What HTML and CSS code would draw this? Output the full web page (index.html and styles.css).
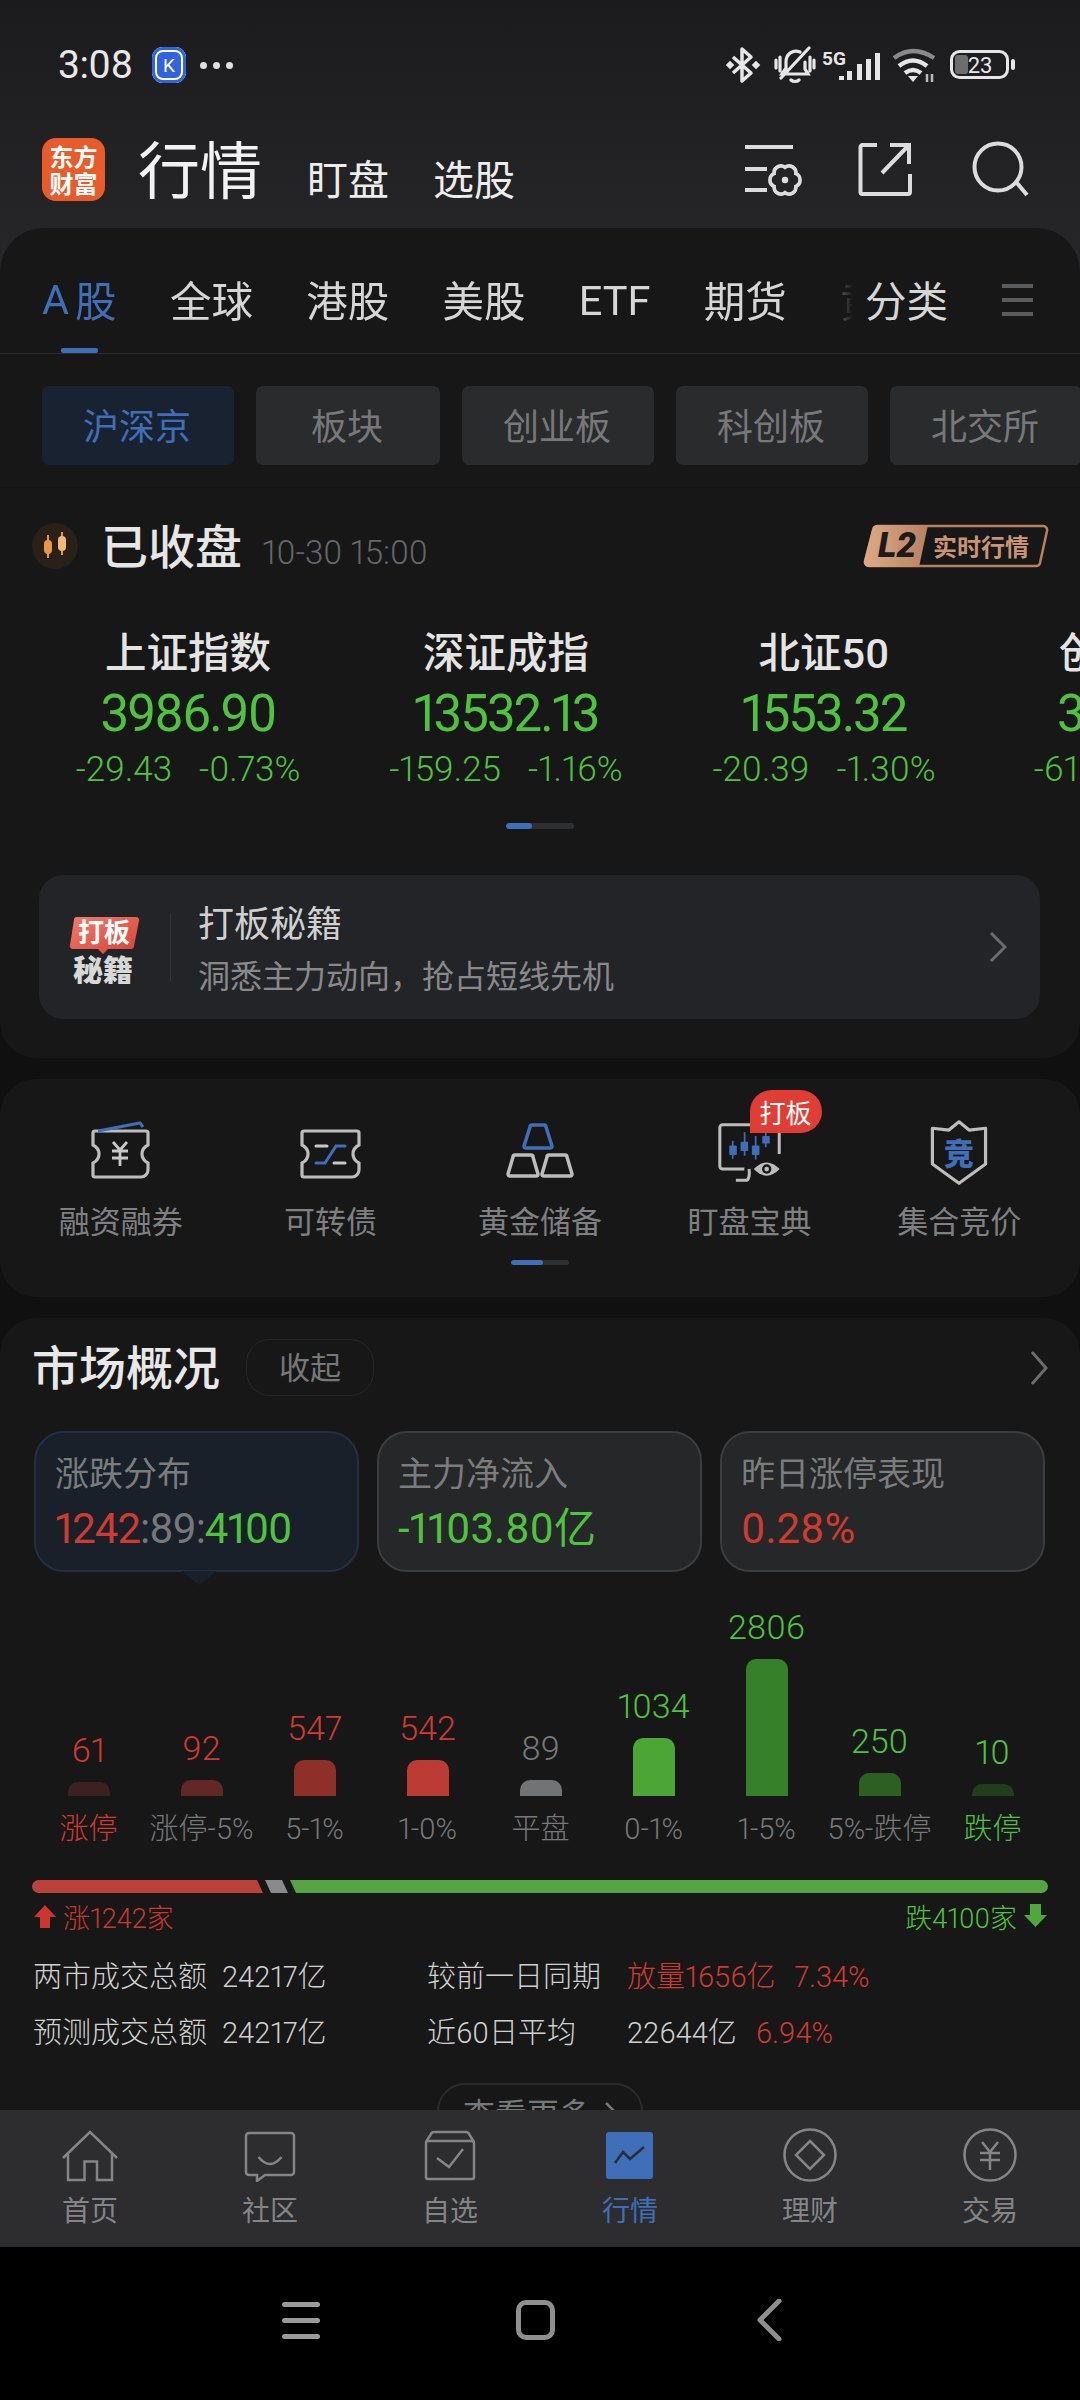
FILE: index.html
```html
<!DOCTYPE html>
<html lang="zh-CN">
<head>
<meta charset="utf-8">
<title>行情</title>
<link rel="stylesheet" href="styles.css">
</head>
<body>
<div class="phone">
  <div class="statusbar">
    <span class="clock">3:08</span>
    <span class="kbadge">K</span>
    <span class="dots"><i></i><i></i><i></i></span>
    <div class="status-icons">
      <svg class="si si-bt" width="36" height="38" viewBox="0 0 36 38"><path d="M8 11 26 27 17 35V3l9 8L8 27" fill="none" stroke="#e6e6e6" stroke-width="3.500" stroke-linejoin="round"/><rect x="2" y="16" width="6" height="6" fill="#e6e6e6" transform="rotate(45 5 19)"/><rect x="28" y="16" width="6" height="6" fill="#e6e6e6" transform="rotate(45 31 19)"/></svg>
      <svg class="si si-bell" width="42" height="38" viewBox="0 0 42 38"><path d="M26 6c-7-3-14 2-14 10v6l-4 6h26l-3-5v-7M17 34c2 2 6 2 8 0M7 32 35 2M2 14v8M6 11v14M36 11v14M40 14v8" fill="none" stroke="#e6e6e6" stroke-width="3.200" stroke-linecap="round"/></svg>
      <svg class="si si-net" width="60" height="33" viewBox="0 0 60 33"><text class="five-g" x="0" y="16">5G</text><path d="M17 27v4h5v-4zM25 22v9h5v-9zM35 15v16h5V15zM44 10v21h5V10zM53 4v27h5V4z" fill="#e6e6e6"/></svg>
      <svg class="si si-wifi" width="44" height="36" viewBox="0 0 44 36"><path d="M2 11Q21-3 42 11" fill="none" stroke="#8a8a8a" stroke-width="4.500"/><path d="M7 19Q21 8 35 19M13 26Q21 20 29 26" fill="none" stroke="#e6e6e6" stroke-width="4.500"/><path d="M21 35l-5-6h10z" fill="#e6e6e6"/><path d="M35 27v8M40 27v8" stroke="#bbb" stroke-width="2.500"/></svg>
      <svg class="si" width="66" height="30" viewBox="0 0 66 30"><rect x="1.500" y="1.500" width="56" height="26" rx="8" fill="none" stroke="#e6e6e6" stroke-width="3"/><rect x="5" y="5" width="13" height="19" rx="3" fill="#6d6d6f"/><rect x="61" y="9" width="4" height="11" rx="2" fill="#e6e6e6"/><text class="batt" x="30" y="23" text-anchor="middle">23</text></svg>
    </div>
  </div>

  <header class="appbar">
    <div class="logo"><span>东方</span><span>财富</span></div>
    <div class="heads">
      <span class="h-main">行情</span>
      <span class="h-sub">盯盘</span>
      <span class="h-sub">选股</span>
    </div>
    <div class="app-icons">
      <svg width="60" height="54" viewBox="0 0 60 54" class="ai-list"><path d="M2 5H50M2 27H24M2 48H24" stroke="#dcdcdc" stroke-width="4" fill="none"/><g transform="translate(42 38) scale(1.150)"><path d="M9.500 5.500A6 6 0 0 1 0 11 6 6 0 0 1-9.500 5.500 6 6 0 0 1-9.500-5.500 6 6 0 0 1 0-11 6 6 0 0 1 9.500-5.500 6 6 0 0 1 9.500 5.500Z" fill="none" stroke="#dcdcdc" stroke-width="3.200"/><circle r="2.800" fill="#dcdcdc"/></g></svg>
      <svg width="54" height="54" viewBox="0 0 54 54" class="ai-share"><path d="M19 3H4.500a2 2 0 0 0-2 2v45a2 2 0 0 0 2 2H50a2 2 0 0 0 2-2V32M24 31 51 3M32 3h19v19" fill="none" stroke="#dcdcdc" stroke-width="4"/></svg>
      <svg width="58" height="58" viewBox="0 0 58 58" class="ai-search"><circle cx="26" cy="27" r="23.500" fill="none" stroke="#dcdcdc" stroke-width="4"/><path d="M45 43 55 55" stroke="#dcdcdc" stroke-width="4"/></svg>
    </div>
  </header>

  <main class="content">
    <section class="panel panel-market">
      <nav class="tabs">
        <div class="tabs-scroll">
          <span class="tab is-active"><b class="tab-a">A</b>股</span>
          <span class="tab">全球</span>
          <span class="tab">港股</span>
          <span class="tab">美股</span>
          <span class="tab tab-latin">ETF</span>
          <span class="tab">期货</span>
          <span class="tab">黄金</span>
        </div>
        <span class="tab tab-all">分类</span>
        <span class="tab-menu"><i></i><i></i><i></i></span>
      </nav>
      <div class="chips">
        <span class="chip is-active">沪深京</span>
        <span class="chip">板块</span>
        <span class="chip">创业板</span>
        <span class="chip">科创板</span>
        <span class="chip">北交所</span>
      </div>

      <div class="closed">
        <span class="candle-dot"><svg width="46" height="46" viewBox="0 0 46 46"><path d="M16 12v23M30 9v23" stroke="#e89545" stroke-width="2"/><rect x="12" y="17" width="8" height="14" rx="4" fill="#e89545"/><rect x="26" y="13" width="8" height="15" rx="4" fill="#f2b878"/></svg></span>
        <span class="closed-title">已收盘</span>
        <span class="closed-time">10-30 15:00</span>
        <svg class="l2" width="186" height="44" viewBox="0 0 186 44">
          <defs><linearGradient id="cu" x1="0" x2="1"><stop offset="0" stop-color="#dcaa86"/><stop offset="1" stop-color="#b98060"/></linearGradient></defs>
          <path d="M15 2H180a4 4 0 0 1 4 5l-7 32a4 4 0 0 1-4 3H6a4 4 0 0 1-4-5L10 6a5 5 0 0 1 5-4Z" fill="#161718" stroke="#b98060" stroke-width="2.500"/>
          <path d="M15 1H65L56 43H6a5 5 0 0 1-5-6L9 6a6 6 0 0 1 6-5Z" fill="url(#cu)"/>
          <text class="l2-a" x="15" y="33">L2</text>
          <text class="l2-b" x="70" y="32">实时行情</text>
        </svg>
      </div>

      <div class="indices">
        <div class="index"><div class="i-name">上证指数</div><div class="i-price">3986.90</div><div class="i-chg"><span>-29.43</span><span>-0.73%</span></div></div>
        <div class="index"><div class="i-name">深证成指</div><div class="i-price">13532.13</div><div class="i-chg"><span>-159.25</span><span>-1.16%</span></div></div>
        <div class="index"><div class="i-name">北证50</div><div class="i-price">1553.32</div><div class="i-chg"><span>-20.39</span><span>-1.30%</span></div></div>
        <div class="index"><div class="i-name">创业板指</div><div class="i-price">3263.76</div><div class="i-chg"><span>-61.47</span><span>-1.85%</span></div></div>
      </div>
      <div class="pager pager-a"><i></i></div>

      <div class="banner">
        <svg class="banner-ico" width="72" height="70" viewBox="0 0 72 70">
          <defs><linearGradient id="rd" x1="0" x2="1" y1="0" y2="1"><stop offset="0" stop-color="#ef7d6a"/><stop offset="1" stop-color="#d6423a"/></linearGradient></defs>
          <path d="M8 3H68a3 3 0 0 1 3 4L66 32a3 3 0 0 1-3 3H40l-5 5-5-5H5a3 3 0 0 1-3-4L6 6a3 3 0 0 1 2-3Z" fill="url(#rd)"/>
          <text class="bi-a" x="36" y="28" text-anchor="middle">打板</text>
          <text class="bi-b" x="35" y="67" text-anchor="middle">秘籍</text>
        </svg>
        <span class="banner-line"></span>
        <div class="banner-text">
          <div class="banner-title">打板秘籍</div>
          <div class="banner-sub">洞悉主力动向，抢占短线先机</div>
        </div>
        <svg class="chev" width="18" height="30" viewBox="0 0 18 30"><path d="M2 1 16 15 2 29" fill="none" stroke="#6a6b6d" stroke-width="3"/></svg>
      </div>
    </section>

    <section class="panel panel-tools">
      <div class="tools">
        <div class="tool">
          <svg class="tool-ico" width="66" height="66" viewBox="0 0 66 66"><path d="M7 11H58a2 2 0 0 1 2 2V25q-6 3-6 9t6 9v7a7 7 0 0 1-7 7H7a2 2 0 0 1-2-2V43q6-3 6-9t-6-9V13a2 2 0 0 1 2-2Z" fill="none" stroke="#bdbdbd" stroke-width="3.200"/><path d="M10 11 52 3l3 4" fill="none" stroke="#3f6fb8" stroke-width="3"/><path d="M25 22l7 8 7-8M24 31H40M24 38H40M32 30V46" fill="none" stroke="#c8c8c8" stroke-width="2.800"/></svg>
          <span class="tool-label">融资融券</span>
        </div>
        <div class="tool">
          <svg class="tool-ico" width="66" height="66" viewBox="0 0 66 66"><path d="M7 11H60a2 2 0 0 1 2 2V25q-6 3-6 9t6 9v7a7 7 0 0 1-7 7H7a2 2 0 0 1-2-2V43q6-3 6-9t-6-9V13a2 2 0 0 1 2-2Z" fill="none" stroke="#bdbdbd" stroke-width="3.200"/><path d="M19 26H30M37 43H48" stroke="#c8c8c8" stroke-width="3" stroke-linecap="round"/><path d="M19 43h9L39 26h9" fill="none" stroke="#3f6fb8" stroke-width="3" stroke-linecap="round"/></svg>
          <span class="tool-label">可转债</span>
        </div>
        <div class="tool">
          <svg class="tool-ico" width="68" height="66" viewBox="0 0 68 66"><path d="M26 5H38a2 2 0 0 1 2 2L46 26a2 2 0 0 1-2 2H20a2 2 0 0 1-2-2L24 7a2 2 0 0 1 2-2Z" fill="none" stroke="#3f6fb8" stroke-width="3.500" stroke-linejoin="round"/><path d="M9 35H25a2 2 0 0 1 2 2L32 54a2 2 0 0 1-2 2H4a2 2 0 0 1-2-2L7 37a2 2 0 0 1 2-2ZM43 35H59a2 2 0 0 1 2 2L66 54a2 2 0 0 1-2 2H38a2 2 0 0 1-2-2L41 37a2 2 0 0 1 2-2Z" fill="none" stroke="#bdbdbd" stroke-width="3.500"/></svg>
          <span class="tool-label">黄金储备</span>
        </div>
        <div class="tool">
          <svg class="tool-ico" width="72" height="66" viewBox="0 0 72 70"><path d="M38 5H7a3 3 0 0 0-3 3V49a3 3 0 0 0 3 3H30M67 10V36M35 52c1 8-1 12-3 12H21" fill="none" stroke="#bdbdbd" stroke-width="3.200"/><path d="M17.700 22v19M30.300 13v25M42 17v25M52.700 12v17" stroke="#3f6fb8" stroke-width="1.800"/><rect x="14" y="27" width="8" height="10" rx="1" fill="#3f6fb8"/><rect x="26" y="23" width="8" height="10" rx="1" fill="#3f6fb8"/><rect x="38" y="27" width="8" height="10" rx="1" fill="#3f6fb8"/><rect x="49" y="17" width="8" height="8" rx="1" fill="#3f6fb8"/><path d="M40 52q13.700-14 27.500 0-13.800 14-27.500 0Z" fill="#bdbdbd"/><circle cx="53.700" cy="52" r="5" fill="#161718"/><circle cx="53.700" cy="52" r="2.500" fill="#bdbdbd"/></svg>
          <span class="tag-hot">打板</span>
          <span class="tool-label">盯盘宝典</span>
        </div>
        <div class="tool">
          <svg class="tool-ico" width="66" height="70" viewBox="0 0 66 72"><path d="M4 9 22 11 33 2 44 11 62 9V48L33 69 4 48Z" fill="none" stroke="#bdbdbd" stroke-width="3.500" stroke-linejoin="round"/><text class="shield-t" x="33" y="49" text-anchor="middle">竞</text></svg>
          <span class="tool-label">集合竞价</span>
        </div>
      </div>
      <div class="pager pager-b"><i></i></div>
    </section>

    <section class="panel panel-overview">
      <div class="ov-head">
        <span class="ov-title">市场概况</span>
        <span class="ov-pill"><span>收起</span></span>
        <svg class="chev chev-ov" width="18" height="34" viewBox="0 0 18 34"><path d="M2 1 16 17 2 33" fill="none" stroke="#6a6b6d" stroke-width="3"/></svg>
      </div>
      <div class="cards">
        <div class="card is-active"><div class="card-label">涨跌分布</div><div class="card-value card-value-tight"><span class="up">1242</span><span class="flat">:89:</span><span class="down">4100</span></div></div>
        <div class="card"><div class="card-label">主力净流入</div><div class="card-value down">-1103.80亿</div></div>
        <div class="card"><div class="card-label">昨日涨停表现</div><div class="card-value up">0.28%</div></div>
      </div>
      <div class="chart">
        <div class="col"><span class="c-val up">61</span><i class="bar b1" style="height:14px"></i><span class="c-lab up">涨停</span></div>
        <div class="col"><span class="c-val up">92</span><i class="bar b2" style="height:16px"></i><span class="c-lab">涨停-5%</span></div>
        <div class="col"><span class="c-val up">547</span><i class="bar b3" style="height:36px"></i><span class="c-lab">5-1%</span></div>
        <div class="col"><span class="c-val up">542</span><i class="bar b4" style="height:36px"></i><span class="c-lab">1-0%</span></div>
        <div class="col"><span class="c-val flat">89</span><i class="bar b5" style="height:16px"></i><span class="c-lab">平盘</span></div>
        <div class="col"><span class="c-val down">1034</span><i class="bar b6" style="height:58px"></i><span class="c-lab">0-1%</span></div>
        <div class="col"><span class="c-val down">2806</span><i class="bar b7" style="height:137px"></i><span class="c-lab">1-5%</span></div>
        <div class="col"><span class="c-val down">250</span><i class="bar b8" style="height:23px"></i><span class="c-lab">5%-跌停</span></div>
        <div class="col"><span class="c-val down">10</span><i class="bar b9" style="height:12px"></i><span class="c-lab down">跌停</span></div>
      </div>
      <div class="ratio">
        <i class="r-up" style="width:231px"></i>
        <i class="r-flat" style="width:23px"></i>
        <i class="r-down"></i>
      </div>
      <div class="ratio-text">
        <span class="rt up"><svg width="24" height="24" viewBox="0 0 24 24"><path d="M12 1 23 13H17V24H7V13H1Z" fill="#c9372f"/></svg>涨1242家</span>
        <span class="rt down">跌4100家<svg width="25" height="24" viewBox="0 0 25 24"><path d="M12.500 23 24 11H18V0H7V11H1Z" fill="#4ea83a"/></svg></span>
      </div>
      <div class="turnover">
        <span>两市成交总额</span><span>24217亿</span><span>较前一日同期</span><span class="t-last up"><span>放量1656亿</span><span>7.34%</span></span>
        <span>预测成交总额</span><span>24217亿</span><span>近60日平均</span><span class="t-last"><span>22644亿</span><span class="up">6.94%</span></span>
      </div>
      <div class="more"><span>查看更多</span><svg width="12" height="20" viewBox="0 0 12 20"><path d="M1 1 10 10 1 19" fill="none" stroke="#77787a" stroke-width="2.500"/></svg></div>
    </section>
  </main>

  <nav class="tabbar">
    <div class="nav-item">
      <svg width="60" height="54" viewBox="0 0 60 54"><path d="M3 30 30 4 57 30M8 25V52H24.500V33.500H37V52H52V25" fill="none" stroke="#848587" stroke-width="2.500"/></svg>
      <span>首页</span>
    </div>
    <div class="nav-item">
      <svg width="60" height="54" viewBox="0 0 60 54"><path d="M9 5H51a3 3 0 0 1 3 3V44a3 3 0 0 1-3 3H25l-8 6V47H9a3 3 0 0 1-3-3V8a3 3 0 0 1 3-3ZM18.500 29q11.500 14 23 0" fill="none" stroke="#848587" stroke-width="2.500"/></svg>
      <span>社区</span>
    </div>
    <div class="nav-item">
      <svg width="60" height="54" viewBox="0 0 60 54"><path d="M8 51H52a2 2 0 0 0 2-2V15a2 2 0 0 0-2-2H8a2 2 0 0 0-2 2V49a2 2 0 0 0 2 2ZM6 14 11 6a3 3 0 0 1 3-2H46a3 3 0 0 1 3 2l5 8M17 30l12 9L43 21" fill="none" stroke="#848587" stroke-width="2.500"/></svg>
      <span>自选</span>
    </div>
    <div class="nav-item is-active">
      <svg width="60" height="54" viewBox="0 0 60 54"><rect x="6" y="4" width="47" height="47" rx="3" fill="#3f6fb8"/><path d="M15 35 23 24 30 31 44 19" fill="none" stroke="#2d2e30" stroke-width="2.500"/></svg>
      <span>行情</span>
    </div>
    <div class="nav-item">
      <svg width="60" height="54" viewBox="0 0 60 54"><circle cx="30" cy="27" r="25.500" fill="none" stroke="#848587" stroke-width="2.500"/><path d="M30 13 44 27 30 41 16 27Z" fill="none" stroke="#848587" stroke-width="2.500"/></svg>
      <span>理财</span>
    </div>
    <div class="nav-item">
      <svg width="60" height="54" viewBox="0 0 60 54"><circle cx="30" cy="27" r="25.500" fill="none" stroke="#848587" stroke-width="2.500"/><path d="M22 14l8 10 8-10M20 25H40M20 32H40M30 24V42" fill="none" stroke="#848587" stroke-width="2.500"/></svg>
      <span>交易</span>
    </div>
  </nav>

  <div class="sysnav">
    <div class="sys-slot"><span class="sys-menu"><i></i><i></i><i></i></span></div>
    <div class="sys-slot"><span class="sys-home"></span></div>
    <div class="sys-slot"><svg width="26" height="42" viewBox="0 0 26 42"><path d="M23 2 4 21l19 19" fill="none" stroke="#8f8f8f" stroke-width="5" stroke-linecap="round" stroke-linejoin="round"/></svg></div>
  </div>
</div>
</body>
</html>
```
FILE: styles.css
```css
* { box-sizing: border-box; }
html, body { margin: 0; padding: 0; background: #000; }
body { font-family: Roboto, "Noto Sans CJK SC", sans-serif; font-variant-numeric: proportional-nums; color: #d8d8d8; }
i { display: block; font-style: normal; }
svg { display: block; flex-shrink: 0; }

.phone {
  width: 1080px; height: 2400px; overflow: hidden;
  display: flex; flex-direction: column;
  background: linear-gradient(#1b1b1d 0, #272729 272px, #101011 272px);
}

/* status bar */
.statusbar { height: 130px; flex-shrink: 0; display: flex; align-items: center; padding: 0 64px 0 58px; }
.clock { font-size: 39px; letter-spacing: -.5px; color: #e8e8e8; width: 94px; }
.kbadge {
  width: 34px; height: 36px; border-radius: 11px; background: #2f63e0; color: #fff;
  font-size: 19px; display: flex; align-items: center; justify-content: center;
  box-shadow: inset 0 0 0 3px #2f63e0, inset 0 0 0 5px #fff;
}
.dots { display: flex; gap: 6px; margin-left: 14px; }
.dots i { width: 7px; height: 7px; border-radius: 50%; background: #e0e0e0; }
.status-icons { margin-left: auto; display: flex; align-items: center; }
.si-bt { margin-right: 13px; }
.si-bell { margin-right: 6px; }
.si-net { margin-right: 10px; }
.si-wifi { margin-right: 14px; }
.five-g { font: 700 19px Roboto, sans-serif; fill: #e6e6e6; }
.batt { font: 400 22px Roboto, sans-serif; fill: #e8e8e8; }

/* app bar */
.appbar { height: 98px; flex-shrink: 0; display: flex; align-items: center; padding: 0 50px 20px 42px; }
.logo {
  width: 63px; height: 63px; border-radius: 14px; background: #e85c2b; color: #fff;
  display: flex; flex-direction: column; align-items: center; justify-content: center;
  font-size: 24px; line-height: 27px; font-weight: 700; font-family: "Noto Sans CJK SC", sans-serif;
}
.heads { display: flex; align-items: baseline; margin: 7px 0 0 33px; }
.h-main { font-size: 62px; line-height: 70px; color: #f2f2f2; margin-right: 45px; }
.h-sub { font-size: 41px; color: #ededed; margin-right: 44px; position: relative; top: 1px; }
.app-icons { margin-left: auto; display: flex; align-items: center; }
.ai-list { margin-right: 55px; }
.ai-share { margin-right: 60px; }

/* panels */
.content { flex: 1; min-height: 0; overflow: hidden; display: flex; flex-direction: column; gap: 21px; }
.panel { background: #171718; border-radius: 36px; flex-shrink: 0; }
.panel-market { border-radius: 44px 44px 36px 36px; height: 830px; }
.panel-tools { height: 218px; padding-top: 41px; }

/* tabs */
.tabs { display: flex; height: 126px; border-bottom: 1px solid #2a2b2d; white-space: nowrap; }
.tabs-scroll {
  width: 855px; flex-shrink: 0; display: flex; gap: 53.300px; padding-left: 42px; overflow: hidden;
  -webkit-mask-image: linear-gradient(90deg, #000 815px, rgba(0, 0, 0, .3) 842px, transparent 853px);
  mask-image: linear-gradient(90deg, #000 815px, rgba(0, 0, 0, .3) 842px, transparent 853px);
}
.tab { position: relative; display: flex; align-items: center; font-size: 41.500px; color: #d6d6d6; padding-top: 17px; flex-shrink: 0; }
.tab-latin { padding-top: 20px; }
.tab.is-active { color: #3f6fb8; }
.tab.is-active::after {
  content: ""; position: absolute; left: 19px; bottom: 0; width: 37px; height: 5px;
  border-radius: 2px; background: #3f6fb8;
}
.tab-a { font-weight: 400; margin-right: 6px; }
.tab-all { margin-left: 10px; }
.tab-menu { display: flex; flex-direction: column; justify-content: center; gap: 10px; margin: 18px 0 0 54px; }
.tab-menu i { width: 31px; height: 4px; background: #5b5c5e; }

/* chips */
.chips { display: flex; gap: 22px; padding: 32px 0 22px 42px; overflow: hidden; border-bottom: 1px solid #121314; }
.chip {
  flex-shrink: 0; height: 79px; min-width: 184px; padding: 0 43px 3px 41px; border-radius: 7px;
  background: #2a2b2d; color: #77787a; font-size: 36px; display: flex; align-items: center; justify-content: center;
}
.chip.is-active { background: #192230; color: #3f6fb8; }

/* closed */
.closed { display: flex; align-items: center; height: 46px; margin-top: 35px; padding: 0 32px; }
.candle-dot { width: 46px; height: 46px; border-radius: 50%; background: #2a2018; }
.closed-title { font-size: 47px; font-weight: 500; color: #e6e6e6; margin: -6px 0 0 23px; }
.closed-time { font-size: 33px; font-weight: 300; color: #66676a; margin: 13px 0 0 20px; }
.l2 { margin-left: auto; margin-right: -1px; }
.l2-a { font: italic 900 35px Roboto, sans-serif; fill: #1b1b1b; }
.l2-b { font: 700 24px "Noto Sans CJK SC", sans-serif; fill: #c99473; }

/* indices */
.indices { display: flex; padding-left: 29px; margin-top: 60px; overflow: hidden; }
.index { width: 318px; flex-shrink: 0; text-align: center; }
.i-name { font-size: 41.500px; line-height: 50px; color: #e4e4e4; font-weight: 500; }
.i-price { font-size: 51px; line-height: 56px; letter-spacing: -2px; margin-top: 7px; color: #4fc33e; }
.i-chg { display: flex; justify-content: center; gap: 27px; margin-top: 8px; font-size: 35px; line-height: 40px; font-weight: 300; color: #4fc33e; white-space: nowrap; }

.pager { background: #2e2f31; border-radius: 3px; margin-left: auto; margin-right: auto; overflow: hidden; }
.pager i { height: 100%; background: #3f6fb8; border-radius: 3px; }
.pager-a { width: 68px; height: 6px; margin-top: 33px; }
.pager-a i { width: 26px; }
.pager-b { width: 58px; height: 5px; margin-top: 17px; }
.pager-b i { width: 32px; }

/* banner */
.banner {
  margin: 46px 40px 0 39px; height: 144px; border-radius: 24px; background: #232427;
  display: flex; align-items: center; padding-left: 29px;
}
.banner-ico { margin-top: 3px; }
.bi-a { font: 700 26px "Noto Sans CJK SC", sans-serif; fill: #fff; }
.bi-b { font: 900 30px "Noto Sans CJK SC", sans-serif; fill: #d8d8d8; }
.banner-line { width: 1px; height: 68px; background: #34353a; margin-left: 30px; }
.banner-text { margin: 6px 0 0 27px; flex: 1; }
.banner-title { font-size: 36px; line-height: 50px; color: #d0d0d0; }
.banner-sub { font-size: 32px; line-height: 46px; margin-top: 4px; color: #88898b; }
.banner .chev { margin-right: 33px; }

/* tools */
.tools { display: grid; grid-template-columns: repeat(5, 1fr); padding: 0 16px; }
.tool { position: relative; display: flex; flex-direction: column; align-items: center; }
.tool-ico { height: 66px; }
.tool-label { font-size: 31px; line-height: 40px; margin-top: 17px; color: #7f8082; white-space: nowrap; }
.tag-hot {
  position: absolute; left: 50%; top: -30px; width: 72px; height: 43px;
  border-radius: 22px 22px 22px 0; background: #e03e35; color: #fff; font-size: 26px;
  display: flex; align-items: center; justify-content: center;
}
.shield-t { font: 900 33px "Noto Sans CJK SC", sans-serif; fill: #3f6fb8; }

/* overview */
.panel-overview { flex: 1; padding-top: 21px; border-radius: 36px 36px 0 0; overflow: hidden; }
.ov-head { display: flex; align-items: center; height: 57px; padding: 0 32px 0 32px; }
.ov-title { font-size: 47px; font-weight: 500; color: #e8e8e8; margin-top: -6px; }
.ov-pill {
  margin-left: 26px; width: 128px; height: 57px; border: 1px solid #26272a; border-radius: 24px;
  display: flex; align-items: center; justify-content: center; font-size: 31px; color: #77787a; padding-bottom: 5px;
}
.chev-ov { margin-left: auto; }

.cards { display: grid; grid-template-columns: repeat(3, 325px); gap: 18px; padding-left: 34px; margin-top: 35px; }
.card { position: relative; height: 141px; border: 2px solid #3c3d3f; border-radius: 30px; background: #262728; padding: 19px 0 0 19px; }
.card.is-active { background: #192029; border-color: #232f42; }
.card.is-active::after {
  content: ""; position: absolute; left: 145px; bottom: -15px; width: 36px; height: 14px;
  background: #192029; clip-path: polygon(0 0, 100% 0, 50% 100%);
}
.card-label { font-size: 34px; line-height: 44px; color: #7b7c7e; }
.card-value { font-size: 42px; line-height: 50px; margin-top: 8px; }
.card-value-tight { letter-spacing: -1px; }
.up { color: #cf3a31; }
.down { color: #4fc33e; }
.flat { color: #77787a; }

.chart { display: grid; grid-template-columns: repeat(9, 113px); padding-left: 32px; margin-top: 35px; height: 241px; align-items: end; }
.col { display: flex; flex-direction: column; align-items: center; }
.c-val { font-size: 34px; line-height: 40px; font-weight: 300; margin-bottom: 12px; }
.bar { width: 42px; border-radius: 10px 10px 0 0; }
.c-lab { font-size: 29px; line-height: 40px; margin-top: 13px; color: #77787a; font-weight: 300; white-space: nowrap; }
.c-lab.up { color: #cf3a31; }
.c-lab.down { color: #4fc33e; }
.b1 { background: #3d2020; }
.b2 { background: #632825; }
.b3 { background: #8f2f2a; }
.b4 { background: #bc3c35; }
.b5 { background: #727375; }
.b6 { background: #4ca636; }
.b7 { background: #37802a; }
.b8 { background: #2d5e22; }
.b9 { background: #1f3e1a; }

.ratio { display: flex; gap: 2px; height: 13px; margin: 32px 32px 0; }
.r-up { background: #bb423b; border-radius: 7px 0 0 7px; clip-path: polygon(0 0, calc(100% - 6px) 0, 100% 100%, 0 100%); }
.r-flat { background: #8a8a8c; clip-path: polygon(0 0, calc(100% - 6px) 0, 100% 100%, 6px 100%); }
.r-down { flex: 1; background: #55a545; border-radius: 0 7px 7px 0; clip-path: polygon(0 0, 100% 0, 100% 100%, 6px 100%); }

.ratio-text { display: flex; justify-content: space-between; align-items: center; height: 40px; margin-top: 3px; padding: 0 32px 0 33px; }
.rt { display: flex; align-items: center; gap: 6px; font-size: 27px; font-weight: 300; }
.rt.up { color: #c9372f; }
.rt.down { color: #4fc33e; }

.turnover { display: grid; grid-template-columns: 189px 205px 200px auto; padding-left: 33px; margin-top: 13px; font-size: 29px; line-height: 56px; color: #d0d0d0; font-weight: 300; }
.t-last { display: flex; gap: 19px; }
.more {
  width: 206px; height: 58px; margin: 22px auto 0 437px; border: 2px solid #2a2b2d; border-radius: 28px;
  display: flex; align-items: center; justify-content: center; gap: 14px; font-size: 32px; color: #77787a;
}

/* bottom nav */
.tabbar { height: 137px; flex-shrink: 0; background: #2d2d2f; display: grid; grid-template-columns: repeat(6, 180px); padding-top: 18px; }
.nav-item { display: flex; flex-direction: column; align-items: center; font-size: 28px; line-height: 36px; color: #848587; }
.nav-item span { margin-top: 12px; }
.nav-item.is-active { color: #3f6fb8; }

.sysnav { height: 153px; flex-shrink: 0; background: #000; display: flex; align-items: center; padding: 0 0 7px 184px; }
.sys-slot { width: 234px; display: flex; justify-content: center; }
.sys-menu { display: flex; flex-direction: column; gap: 11px; }
.sys-menu i { width: 38px; height: 5px; border-radius: 3px; background: #9a9a9a; }
.sys-home { width: 39px; height: 40px; border: 5px solid #8f8f8f; border-radius: 10px; }
```
